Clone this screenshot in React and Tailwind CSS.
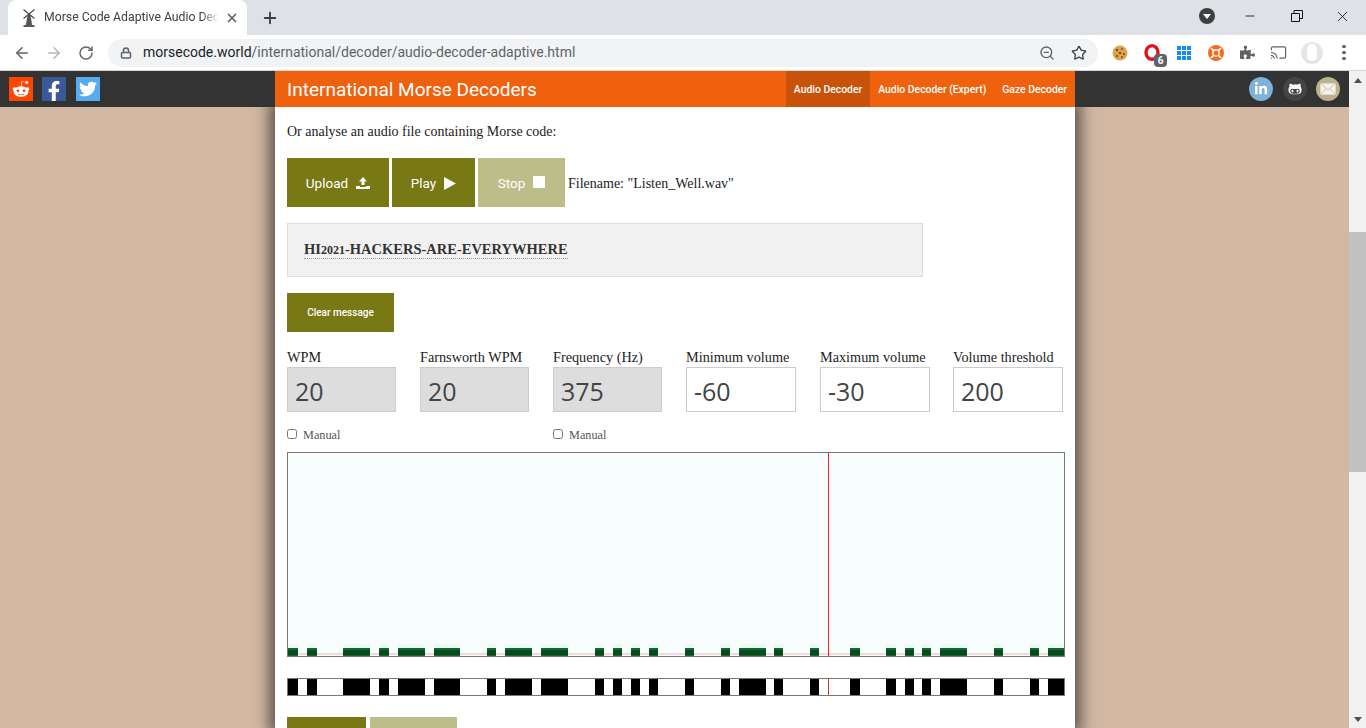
import React from "react";
import {
  ArrowLeft,
  ArrowRight,
  Cast,
  Lock,
  Minus,
  Plus,
  RotateCw,
  Star,
  X,
  ZoomOut,
} from "lucide-react";
import { FaFacebookF, FaGithubAlt, FaLinkedinIn, FaPuzzlePiece, FaRedditAlien, FaTwitter } from "react-icons/fa";

const marks = [
  [288, 298], [307, 317], [343, 370], [379, 389], [398, 425], [434, 460], [487, 496],
  [505, 532], [541, 568], [595, 604], [613, 622], [631, 640], [649, 658], [685, 694],
  [721, 730], [739, 766], [774, 783], [810, 819], [850, 860], [886, 896], [905, 914],
  [922, 931], [940, 967], [994, 1003], [1030, 1039], [1048, 1064],
];

const fields = [
  { label: "WPM", value: "20", locked: true, manual: true },
  { label: "Farnsworth WPM", value: "20", locked: true },
  { label: "Frequency (Hz)", value: "375", locked: true, manual: true },
  { label: "Minimum volume", value: "-60" },
  { label: "Maximum volume", value: "-30" },
  { label: "Volume threshold", value: "200" },
];

const ui = "font-['Roboto','Open_Sans',sans-serif]";

const Windmill = () => (
  <svg width="16" height="19" viewBox="0 0 16 19" fill="none" stroke="#444" strokeWidth="1.1">
    <path d="M2.5 1.5 13.5 10.5M13.5 1.5 2.5 10.5" />
    <path d="M6.5 7h3l1.6 10h-6.2z" fill="#555" stroke="none" />
    <path d="M2.5 18h11" stroke="#222" strokeWidth="1.5" />
  </svg>
);

const Cookie = () => (
  <svg width="16" height="16" viewBox="0 0 16 16">
    <circle cx="8" cy="8" r="7.5" fill="#dca24e" />
    <g fill="#7a4a1c">
      <circle cx="5" cy="5" r="1.2" />
      <circle cx="10" cy="4" r="1" />
      <circle cx="8" cy="8" r="1.2" />
      <circle cx="12" cy="9" r="1.1" />
      <circle cx="5" cy="11" r="1.1" />
      <circle cx="10" cy="12" r="1" />
    </g>
  </svg>
);

const OperaBlock = () => (
  <span className="relative ml-[16px] w-[16px] h-[17px]">
    <svg width="16" height="17" viewBox="0 0 16 17">
      <ellipse cx="8" cy="8.5" rx="6" ry="6.8" fill="none" stroke="#e0141c" strokeWidth="3.4" />
      <path d="M6 6.5c0-1 1.5-1 1.5 0V3.8c0-1 1.5-1 1.5 0v3l1-.6c1-.4 1.4.6 1 1.2L9.5 12H7L6 10z" fill="#fff" />
    </svg>
    <span className="absolute left-[10px] top-[10px] w-[13px] h-[13px] rounded-sm bg-[#5f6368] text-white text-[10px] font-bold leading-[13px] text-center">
      6
    </span>
  </span>
);

const Lifebuoy = () => (
  <svg width="16" height="16" viewBox="0 0 16 16">
    <circle cx="8" cy="8" r="8" fill="#f26b21" />
    <circle cx="8" cy="8" r="3.2" fill="none" stroke="#fff" strokeWidth="1.3" />
    <path d="M3 3l2.7 2.7M13 3l-2.7 2.7M3 13l2.7-2.7M13 13l-2.7-2.7" stroke="#fff" strokeWidth="1.6" />
  </svg>
);

const RestoreIcon = () => (
  <svg width="12" height="12" viewBox="0 0 12 12" fill="none" stroke="#111" strokeWidth="1">
    <path d="M.5 3.5h8v8h-8z" />
    <path d="M3 3.5V.5h8.5v8H8.5" />
  </svg>
);

const Dots = () => (
  <span className="ml-[19px] flex flex-col gap-[2.5px]">
    <span className="w-[3.5px] h-[3.5px] rounded-full bg-[#5f6368]" />
    <span className="w-[3.5px] h-[3.5px] rounded-full bg-[#5f6368]" />
    <span className="w-[3.5px] h-[3.5px] rounded-full bg-[#5f6368]" />
  </span>
);

const ChromeBar = () => (
  <div className={`${ui} shrink-0`}>
    <div className="h-[35px] bg-[#dee1e6] flex items-end pl-2">
      <div className="w-[239px] h-[35px] bg-white rounded-t-lg flex items-center pl-[13px] text-[12.25px] text-[#3c4043]">
        <Windmill />
        <span className="ml-[7px] w-[175px] whitespace-nowrap [mask-image:linear-gradient(to_right,black_90%,transparent)]">
          Morse Code Adaptive Audio Dec
        </span>
        <X size={14} strokeWidth={3} className="ml-[6px] text-[#5f6368]" />
      </div>
      <Plus size={18} strokeWidth={2.5} className="ml-[14px] mb-[8px] text-[#3c4043]" />
      <div className="flex-1" />
      <div className="flex items-center h-[35px] pb-[3px]">
        <span className="w-4 h-4 rounded-full bg-[#3c4043] flex items-center justify-center">
          <span className="border-x-[4px] border-x-transparent border-t-[5px] border-t-white" />
        </span>
        <Minus size={14} strokeWidth={1.3} className="ml-[28px] text-black" />
        <span className="ml-[34px]">
          <RestoreIcon />
        </span>
        <X size={17} strokeWidth={1.1} className="ml-[31px] mr-[15px] text-black" />
      </div>
    </div>
    <div className="h-[36px] bg-white border-b border-[#d5d7da] flex items-center text-[#5f6368]">
      <ArrowLeft size={18} strokeWidth={2} className="ml-[13px]" />
      <ArrowRight size={18} strokeWidth={2} className="ml-[14px] text-[#b4b6b9]" />
      <RotateCw size={16} strokeWidth={2.2} className="ml-[15px]" />
      <div className="ml-[14px] w-[990px] h-[28px] rounded-full bg-[#f1f3f4] flex items-center pl-[12px] pr-[11px] text-[14px]">
        <Lock size={12} strokeWidth={3} />
        <span className="ml-[11px] text-[#202124]">morsecode.world</span>
        <span className="text-[#5f6368]">/international/decoder/audio-decoder-adaptive.html</span>
        <span className="flex-1" />
        <ZoomOut size={16} />
        <Star size={16} className="ml-[16px] text-[#3c4043]" />
      </div>
      <span className="ml-[14px]">
        <Cookie />
      </span>
      <OperaBlock />
      <span className="ml-[17px] w-[14px] h-[14px] grid grid-cols-3 gap-px">
        {[...Array(9).keys()].map((k) => (
          <span key={k} className="bg-[#1a8cf0]" />
        ))}
      </span>
      <span className="ml-[17px]">
        <Lifebuoy />
      </span>
      <FaPuzzlePiece size={15} className="ml-[16px] text-[#5f6368]" />
      <Cast size={17} strokeWidth={1.7} className="ml-[15px]" />
      <span className="ml-[14px] w-[22px] h-[22px] rounded-full bg-[#e3e5e7] flex justify-center items-center">
        <span className="w-[10px] h-[17px] rounded-full bg-white" />
      </span>
      <Dots />
    </div>
  </div>
);

const Social = ({ className, children }) => (
  <span className={`w-6 h-6 flex items-center justify-center text-white ${className}`}>{children}</span>
);

const Nav = () => (
  <div className={`${ui} relative z-10 h-[36px] bg-[#333] flex items-center shrink-0`}>
    <div className="w-[275px] flex items-center pl-[9px] gap-[9px]">
      <Social className="bg-[#ff4500]"><FaRedditAlien size={18} /></Social>
      <Social className="bg-[#3b5998] items-end"><FaFacebookF size={20} /></Social>
      <Social className="bg-[#55acee] ml-px"><FaTwitter size={18} /></Social>
    </div>
    <div className="w-[800px] h-full bg-[#ef610d] flex items-center text-white">
      <span className="pl-3 pt-[2px] text-[19px] flex-1">International Morse Decoders</span>
      <a className="h-full flex items-center pt-px pl-2 pr-2 text-[10.4px] font-medium bg-[#c8520a]">Audio Decoder</a>
      <a className="h-full flex items-center pt-px px-2 text-[10.4px] font-medium">Audio Decoder (Expert)</a>
      <a className="h-full flex items-center pt-px px-2 text-[10.4px] font-medium">Gaze Decoder</a>
    </div>
    <div className="flex-1 flex items-center justify-end pr-[9px] gap-[9px] text-white">
      <Social className="rounded-full bg-[#7fb2d8] mr-px"><FaLinkedinIn size={14} /></Social>
      <Social className="rounded-full bg-[#444]"><FaGithubAlt size={14} /></Social>
      <Social className="rounded-full bg-[#bdb08f]">
        <svg width="16" height="12" viewBox="0 0 16 12" fill="#f4f1ea" stroke="#bdb08f" strokeWidth="0.7">
          <path d="M0 0h16v12H0z" />
          <path d="M0 0l8 7 8-7M0 12l6-6.5M16 12l-6-6.5" fill="none" />
        </svg>
      </Social>
    </div>
  </div>
);

const Button = ({ className = "", children }) => (
  <button className={`${ui} text-white flex items-center justify-center ${className}`}>{children}</button>
);

const UploadIcon = () => (
  <svg width="14" height="12" viewBox="0 0 14 12" fill="white">
    <path d="M7 0l4 4.5H8.5V8h-3V4.5H3z" />
    <path d="M0 9h4v1h6V9h4v3H0z" />
  </svg>
);

const PlayIcon = () => (
  <svg width="12" height="13" viewBox="0 0 11 12" fill="white">
    <path d="M0 0l11 6-11 6z" />
  </svg>
);

const Waveform = () => (
  <svg width="776" height="203" viewBox="288 453 776 203" className="block">
    <rect x="288" y="453" width="776" height="203" fill="#f6fdfc" />
    <rect x="288" y="653" width="776" height="2" fill="#f5d9d9" />
    {marks.map(([a, b]) => (
      <g key={a}>
        <rect x={a} y="644" width={b - a} height="4" fill="#ecf9f4" />
        <rect x={a} y="648" width={b - a} height="8" fill="#0f6a30" />
        <rect x={a} y="650" width={b - a} height="5" fill="#0a4a20" />
      </g>
    ))}
    <rect x="828" y="453" width="1" height="203" fill="#e62a2a" />
  </svg>
);

const Strip = () => (
  <svg width="776" height="16" viewBox="288 679 776 16" className="block">
    <rect x="288" y="679" width="776" height="16" fill="white" />
    {marks.map(([a, b]) => (
      <rect key={a} x={a} y="679" width={b - a} height="16" fill="black" />
    ))}
    <rect x="828" y="679" width="1" height="16" fill="#e62a2a" />
  </svg>
);

const Main = () => (
  <div className="ml-[275px] w-[800px] h-[621px] bg-white shadow-[0_0_14px_6px_rgba(0,0,0,0.55)] px-3 font-['Liberation_Serif',serif] text-[#222] overflow-hidden shrink-0">
    <p className="mt-[16px] h-[17px] text-[14px] leading-[17px]">Or analyse an audio file containing Morse code:</p>
    <div className="mt-[18px] flex items-center">
      <Button className="w-[102px] h-[49px] text-[13.5px] gap-[8px] bg-[#787814] pt-px">Upload <UploadIcon /></Button>
      <Button className="w-[83px] h-[49px] ml-[3px] text-[13.5px] gap-[8px] bg-[#787814] pt-px">Play <PlayIcon /></Button>
      <Button className="w-[87px] h-[49px] ml-[3px] text-[13.5px] gap-[8px] bg-[#bdbd8a] pt-px">
        Stop <span className="w-3 h-3 bg-white -mt-[2px]" />
      </Button>
      <span className="ml-[3px] pt-px text-[14px]">Filename: "Listen_Well.wav"</span>
    </div>
    <div className="mt-[16px] w-[636px] h-[54px] bg-[#f1f1f1] border border-[#ddd] pl-[16px] flex items-center">
      <span className="font-bold text-[14.5px] text-[#333] border-b border-dotted border-[#999] leading-[15px]">
        HI<span className="text-[12px]">2021</span>-HACKERS-ARE-EVERYWHERE
      </span>
    </div>
    <Button className="mt-[16px] w-[107px] h-[39px] text-[10px] font-medium bg-[#787814]">Clear message</Button>
    <div className="mt-[16px] -mr-3 grid grid-cols-[133px_133px_133px_134px_133px_134px]">
      {fields.map((f) => (
        <div key={f.label} className="flex flex-col">
          <span className="h-[19px] leading-[19px] text-[14.25px] whitespace-nowrap">{f.label}</span>
          <div
            className={`font-['Open_Sans',sans-serif] h-[45px] flex items-center pl-[7px] pt-[5px] text-[25px] text-[#444] border ${
              f.locked ? "w-[109px] bg-[#ddd] border-[#ccc]" : "w-[110px] bg-white border-[#ccc]"
            }`}
          >
            {f.value}
          </div>
          <label className="h-[40px] flex items-start pt-[17px] text-[12.25px] text-[#555] leading-[13px]">
            {f.manual && (
              <>
                <input type="checkbox" className="w-[10px] h-[10px]" />
                <span className="ml-[6px]">Manual</span>
              </>
            )}
          </label>
        </div>
      ))}
    </div>
    <div className="w-[778px] border border-[#777]">
      <Waveform />
    </div>
    <div className="mt-[21px] w-[778px] border border-[#777]">
      <Strip />
    </div>
    <div className="mt-[21px] flex gap-[4px]">
      <Button className="w-[79px] h-[40px] bg-[#787814]" />
      <Button className="w-[87px] h-[40px] bg-[#bdbd8a]" />
    </div>
  </div>
);

const Scrollbar = () => (
  <div className="w-[17px] shrink-0 bg-[#f1f1f1] flex flex-col items-center">
    <span className="mt-[7px] border-x-[4px] border-x-transparent border-b-[5px] border-b-[#505050]" />
    <div className="mt-[149px] w-full h-[240px] bg-[#c1c1c1]" />
    <span className="mt-auto mb-[6px] border-x-[4px] border-x-transparent border-t-[5px] border-t-[#505050]" />
  </div>
);

export default function App() {
  return (
    <div className="w-[1366px] h-[728px] overflow-hidden flex flex-col bg-[#d2b8a3]">
      <ChromeBar />
      <div className="flex flex-1 min-h-0">
        <div className="flex-1 flex flex-col min-w-0">
          <Nav />
          <Main />
        </div>
        <Scrollbar />
      </div>
    </div>
  );
}
